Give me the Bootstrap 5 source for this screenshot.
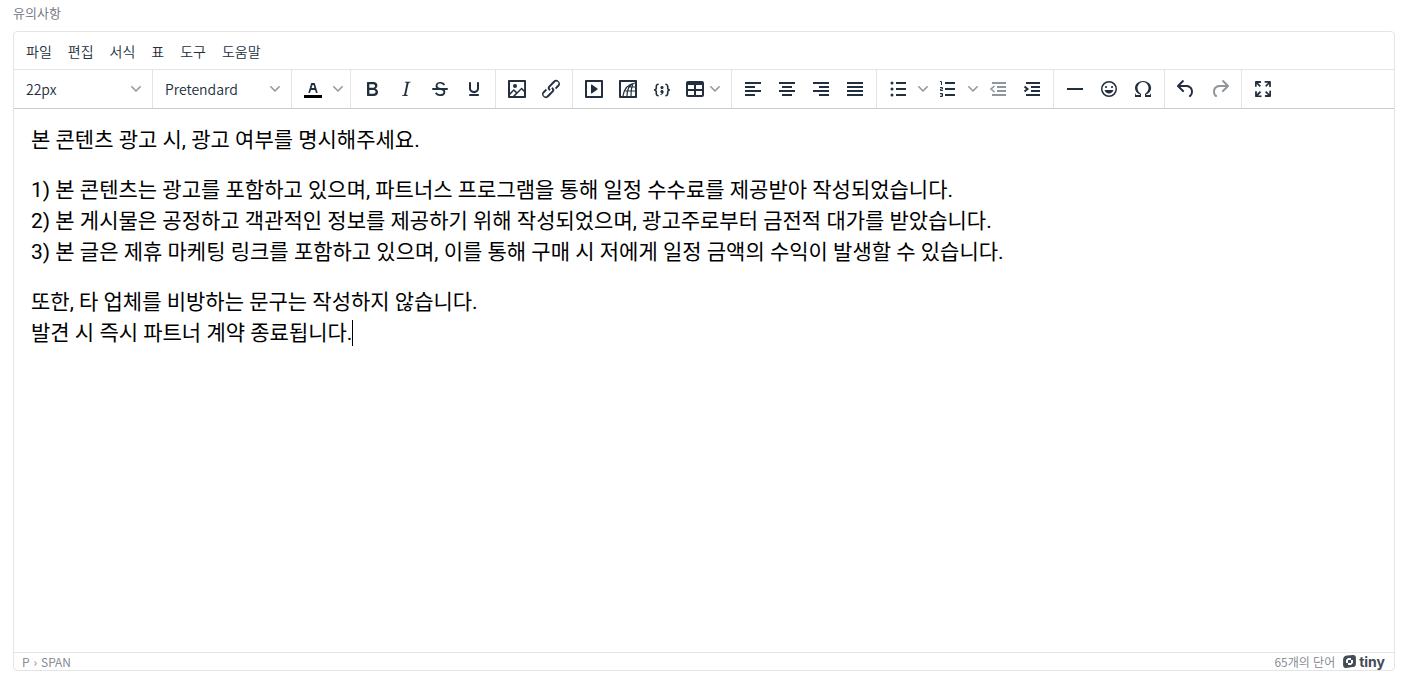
<!DOCTYPE html>
<html lang="ko">
<head>
<meta charset="utf-8">
<meta name="viewport" content="width=device-width, initial-scale=1">
<title>유의사항</title>
<link rel="stylesheet" href="https://cdn.jsdelivr.net/npm/bootstrap@5.3.0/dist/css/bootstrap.min.css">
<style>
  body { font-family: "Noto Sans CJK KR", sans-serif; font-size: 14px; font-weight: 350; color: #222f3e; }
  .page { padding: 3px 9px 6px 13px; }
  .field-label { font-size: 13px; line-height: 20px; margin-bottom: 8px; color: #6c7078; }
  .editor { border: 1px solid #e3e5e5; border-radius: 4px; }
  .menubar { padding: 4px; height: 37px; }
  .menubar .btn { font-size: 14px; font-weight: 350; line-height: 20px; padding: 4px 8px; border: 0; border-radius: 3px; color: #222f3e; }
  .toolbar { border-top: 1px solid #e3e5e5; border-bottom: 1px solid #c9cccd; }
  .tool-group { height: 38px; padding: 0 4px; border-right: 1px solid #e3e5e5; }
  .tool-group:last-child { border-right: 0; }
  .tool-select { appearance: none; width: 130px; height: 28px; padding: 0 24px 0 8px; border: 0; border-radius: 3px; color: #222f3e; font-weight: 350;
    background: transparent url("data:image/svg+xml,%3Csvg xmlns='http://www.w3.org/2000/svg' viewBox='0 0 10 10'%3E%3Cpath fill='none' stroke='%23909499' stroke-width='1.5' stroke-linecap='round' d='M.8 2.8 5 7l4.2-4.2'/%3E%3C/svg%3E") no-repeat right 7px center / 10px 10px; }
  .tool { width: 34px; height: 28px; padding: 0; border: 0; border-radius: 3px; color: #222f3e; }
  .tool:disabled { color: #222f3e; opacity: .5; border: 0; }
  .tool-arrow { width: 16px; }
  .tool-menu { width: 48px; padding-left: 4px; gap: 3px; }
  .tool svg { fill: currentColor; }
  .tool svg.chev { fill: none; stroke: #909499; stroke-width: 1.5; stroke-linecap: round; }
  .doc { padding: 16px 17px; font-family: Roboto, "Noto Sans CJK KR", sans-serif; font-size: 21px; font-weight: 400; line-height: 31px; color: #000; outline: 0; }
  .doc p { margin-bottom: 19px; }
  .caret { display: inline-block; width: 1px; height: 26px; background: #000; vertical-align: -6px; }
  .statusbar { border-top: 1px solid #e3e5e5; height: 18px; padding: 0 9px 0 8px; font-size: 12px; line-height: 18px; color: #7a828b; }
  .statusbar a { color: inherit; }
  .statusbar .brand-link { font-family: Inter, sans-serif; font-size: 14px; font-weight: 700; gap: 3px; color: #434b55; }
</style>
</head>
<body>
<main class="page d-flex flex-column min-vh-100">
  <div class="field-label" id="notice-label">유의사항</div>
  <section class="editor d-flex flex-column flex-grow-1">
    <nav class="menubar d-flex align-items-center" aria-label="메뉴">
      <button class="btn" type="button">파일</button>
      <button class="btn" type="button">편집</button>
      <button class="btn" type="button">서식</button>
      <button class="btn" type="button">표</button>
      <button class="btn" type="button">도구</button>
      <button class="btn" type="button">도움말</button>
    </nav>
    <div class="toolbar d-flex flex-wrap" role="toolbar" aria-label="도구 모음">
      <div class="tool-group d-flex align-items-center"><select class="tool-select" aria-label="글꼴 크기"><option>22px</option></select></div>
      <div class="tool-group d-flex align-items-center"><select class="tool-select" aria-label="글꼴"><option>Pretendard</option></select></div>
      <div class="tool-group d-flex align-items-center">
        <button class="tool btn d-flex align-items-center justify-content-center" type="button" aria-label="글자 색"><svg width="24" height="24"><path fill="#000" d="M3 18h18v3H3z"/><path d="M8.7 16h-.8a.5.5 0 0 1-.5-.6l2.7-9c.1-.3.3-.4.5-.4h2.8c.2 0 .4.1.5.4l2.7 9a.5.5 0 0 1-.5.6h-.8a.5.5 0 0 1-.4-.4l-.7-2.2c0-.3-.3-.4-.5-.4h-3.4c-.2 0-.4.1-.5.4l-.7 2.2c0 .3-.2.4-.4.4Zm2.6-7.6-.6 2a.5.5 0 0 0 .5.6h1.6a.5.5 0 0 0 .5-.6l-.6-2c0-.3-.3-.4-.5-.4h-.4c-.2 0-.4.1-.5.4Z"/></svg></button>
        <button class="tool tool-arrow btn d-flex align-items-center justify-content-center" type="button" aria-label="글자 색 선택"><svg class="chev" width="10" height="10"><path d="M.8 2.8 5 7l4.2-4.2"/></svg></button>
      </div>
      <div class="tool-group d-flex align-items-center">
        <button class="tool btn d-flex align-items-center justify-content-center" type="button" aria-label="굵게"><svg width="24" height="24"><path fill-rule="evenodd" d="M7.8 19c-.3 0-.5 0-.6-.2l-.2-.5V5.7c0-.2 0-.4.2-.5l.6-.2h5c1.5 0 2.7.3 3.5 1 .7.6 1.1 1.4 1.1 2.5a3 3 0 0 1-.6 1.9c-.4.6-1 1-1.6 1.2.4.1.9.3 1.3.6s.8.7 1 1.2c.4.4.5 1 .5 1.6 0 1.3-.4 2.3-1.3 3-.8.7-2.1 1-3.8 1H7.8Zm5-8.3c.6 0 1.2-.1 1.6-.5.4-.3.6-.7.6-1.3 0-1.1-.8-1.7-2.3-1.7H9.3v3.5h3.4Zm.5 6c.7 0 1.3-.1 1.7-.4.4-.4.6-.9.6-1.5s-.2-1-.7-1.4c-.4-.3-1-.4-2-.4H9.4v3.8h4Z"/></svg></button>
        <button class="tool btn d-flex align-items-center justify-content-center" type="button" aria-label="기울임"><svg width="24" height="24"><path d="m16.7 4.7-.1.9h-.3c-.6 0-1 0-1.4.3-.3.3-.4.6-.5 1.1l-2.1 9.8v.6c0 .5.4.8 1.4.8h.2l-.2.8H8l.2-.8h.2c1.1 0 1.8-.5 2-1.5l2-9.8.1-.5c0-.6-.4-.8-1.4-.8h-.3l.2-.9h5.8Z"/></svg></button>
        <button class="tool btn d-flex align-items-center justify-content-center" type="button" aria-label="취소선"><svg width="24" height="24"><path d="M15.6 8.5c-.5-.7-1-1.1-1.3-1.3-.6-.4-1.3-.6-2-.6-2.7 0-2.8 1.7-2.8 2.1 0 1.6 1.8 2 3.2 2.3 4.4.9 4.6 2.8 4.6 3.9 0 1.4-.7 4.1-5 4.1A6.2 6.2 0 0 1 7 16.4l1.5-1.1c.4.6 1.6 2 3.7 2 1.6 0 2.5-.4 3-1.2.4-.8.3-2-.8-2.6-.7-.4-1.6-.7-2.9-1-1-.2-3.9-.8-3.9-3.6C7.6 6 10.3 5 12.4 5c2.9 0 4.2 1.6 4.7 2.4l-1.5 1.1Z"/><path d="M5 11h14a1 1 0 0 1 0 2H5a1 1 0 0 1 0-2Z"/></svg></button>
        <button class="tool btn d-flex align-items-center justify-content-center" type="button" aria-label="밑줄"><svg width="24" height="24"><path d="M16 5c.6 0 1 .4 1 1v5.5a4 4 0 0 1-.4 1.8l-1 1.4a5.3 5.3 0 0 1-5.5 1 5 5 0 0 1-1.6-1c-.5-.4-.8-.9-1.1-1.4a4 4 0 0 1-.4-1.8V6c0-.6.4-1 1-1s1 .4 1 1v5.5c0 .3 0 .6.2 1l.6.7a3.3 3.3 0 0 0 2.2.8 3.4 3.4 0 0 0 2.2-.8c.3-.2.4-.5.6-.8l.2-.9V6c0-.6.4-1 1-1ZM8 17h8c.6 0 1 .4 1 1s-.4 1-1 1H8a1 1 0 0 1 0-2Z"/></svg></button>
      </div>
      <div class="tool-group d-flex align-items-center">
        <button class="tool btn d-flex align-items-center justify-content-center" type="button" aria-label="이미지"><svg width="24" height="24"><path fill-rule="evenodd" d="m5 15.7 3.3-3.2c.3-.3.7-.3 1 0L12 15l4.1-4c.3-.4.8-.4 1 0l2 1.9V5H5v10.7ZM5 18V19h3l2.8-2.9-2-2L5 17.9Zm14-3-2.5-2.4-6.4 6.5H19v-4ZM4 3h16c.6 0 1 .4 1 1v16c0 .6-.4 1-1 1H4a1 1 0 0 1-1-1V4c0-.6.4-1 1-1Zm6 8a2 2 0 1 0 0-4 2 2 0 0 0 0 4Z"/></svg></button>
        <button class="tool btn d-flex align-items-center justify-content-center" type="button" aria-label="링크"><svg width="24" height="24"><path d="M6.2 12.3a1 1 0 0 1 1.4 1.4l-2 2a2 2 0 1 0 2.6 2.8l4.8-4.8a1 1 0 0 0 0-1.4 1 1 0 1 1 1.4-1.3 2.9 2.9 0 0 1 0 4L9.6 20a3.9 3.9 0 0 1-5.5-5.5l2-2Zm11.6-.6a1 1 0 0 1-1.4-1.4l2-2a2 2 0 1 0-2.6-2.8L11 10.3a1 1 0 0 0 0 1.4A1 1 0 1 1 9.6 13a2.9 2.9 0 0 1 0-4L14.4 4a3.9 3.9 0 0 1 5.5 5.5l-2 2Z"/></svg></button>
      </div>
      <div class="tool-group d-flex align-items-center">
        <button class="tool btn d-flex align-items-center justify-content-center" type="button" aria-label="미디어"><svg width="24" height="24"><path fill-rule="evenodd" d="M4 3h16c.6 0 1 .4 1 1v16c0 .6-.4 1-1 1H4a1 1 0 0 1-1-1V4c0-.6.4-1 1-1Zm1 2v14h14V5H5Zm4.8 2.6 5.6 4a.5.5 0 0 1 0 .8l-5.6 4A.5.5 0 0 1 9 16V8a.5.5 0 0 1 .8-.4Z"/></svg></button>
        <button class="tool btn d-flex align-items-center justify-content-center" type="button" aria-label="차트"><svg width="24" height="24"><path fill-rule="evenodd" d="M4 3h16c.6 0 1 .4 1 1v16c0 .6-.4 1-1 1H4a1 1 0 0 1-1-1V4c0-.6.4-1 1-1Zm1 2v14h14V5H5Z"/><path fill="none" stroke="currentColor" stroke-width="1.2" d="M7 19C8 12 12 7 19 6M11 19c0-5 1-9 5-12M15 19c0-4 0-8 2-12M9 14h10M12 10h7"/></svg></button>
        <button class="tool btn d-flex align-items-center justify-content-center" type="button" aria-label="코드 샘플"><svg width="24" height="24"><path d="M7.1 11a2.8 2.8 0 0 1-.8 2 2.8 2.8 0 0 1 .8 2v1.7c0 .3.1.6.4.8.2.3.5.4.8.4.3 0 .4.2.4.4v.8c0 .2-.1.4-.4.4-.7 0-1.4-.3-2-.8-.5-.6-.8-1.3-.8-2V15c0-.3-.1-.6-.4-.8-.2-.3-.5-.4-.8-.4a.4.4 0 0 1-.4-.4v-.8c0-.2.2-.4.4-.4.3 0 .6-.1.8-.4.3-.2.4-.5.4-.8V9.3c0-.7.3-1.4.8-2 .6-.5 1.3-.8 2-.8.3 0 .4.2.4.4v.8c0 .2-.1.4-.4.4-.3 0-.6.1-.8.4-.3.2-.4.5-.4.8V11Zm9.8 0V9.3c0-.3-.1-.6-.4-.8-.2-.3-.5-.4-.8-.4a.4.4 0 0 1-.4-.4V7c0-.2.1-.4.4-.4.7 0 1.4.3 2 .8.5.6.8 1.3.8 2V11c0 .3.1.6.4.8.2.3.5.4.8.4.2 0 .4.2.4.4v.8c0 .2-.2.4-.4.4-.3 0-.6.1-.8.4-.3.2-.4.5-.4.8v1.7c0 .7-.3 1.4-.8 2-.6.5-1.3.8-2 .8a.4.4 0 0 1-.4-.4v-.8c0-.2.1-.4.4-.4.3 0 .6-.1.8-.4.3-.2.4-.5.4-.8V15a2.8 2.8 0 0 1 .8-2 2.8 2.8 0 0 1-.8-2Zm-3.3-.4c0 .4-.1.8-.5 1.1-.3.3-.7.5-1.1.5-.4 0-.8-.2-1.1-.5-.4-.3-.5-.7-.5-1.1 0-.5.1-.9.5-1.2.3-.3.7-.4 1.1-.4.4 0 .8.1 1.1.4.4.3.5.7.5 1.2ZM12 13c.4 0 .8.1 1.1.5.4.3.5.7.5 1.1 0 1-.1 1.6-.5 2a3 3 0 0 1-1.1 1c-.4.3-.8.4-1.1.4a.5.5 0 0 1-.5-.5V17a3 3 0 0 0 1-.2l.6-.6c-.6 0-1-.2-1.3-.5-.2-.3-.3-.7-.3-1 0-.5.1-1 .5-1.2.3-.4.7-.5 1.1-.5Z"/></svg></button>
        <button class="tool tool-menu btn d-flex align-items-center" type="button" aria-label="표"><svg width="24" height="24"><path fill-rule="evenodd" d="M19 4a2 2 0 0 1 2 2v12a2 2 0 0 1-2 2H5a2 2 0 0 1-2-2V6c0-1.1.9-2 2-2h14ZM5 14v4h6v-4H5Zm14 0h-6v4h6v-4Zm0-6h-6v4h6V8ZM5 12h6V8H5v4Z"/></svg><svg class="chev" width="10" height="10"><path d="M.8 2.8 5 7l4.2-4.2"/></svg></button>
      </div>
      <div class="tool-group d-flex align-items-center">
        <button class="tool btn d-flex align-items-center justify-content-center" type="button" aria-label="왼쪽 맞춤"><svg width="24" height="24"><path d="M4 5h16v2H4zM4 9h10v2H4zM4 13h16v2H4zM4 17h10v2H4z"/></svg></button>
        <button class="tool btn d-flex align-items-center justify-content-center" type="button" aria-label="가운데 맞춤"><svg width="24" height="24"><path d="M4 5h16v2H4zM7 9h10v2H7zM4 13h16v2H4zM7 17h10v2H7z"/></svg></button>
        <button class="tool btn d-flex align-items-center justify-content-center" type="button" aria-label="오른쪽 맞춤"><svg width="24" height="24"><path d="M4 5h16v2H4zM10 9h10v2H10zM4 13h16v2H4zM10 17h10v2H10z"/></svg></button>
        <button class="tool btn d-flex align-items-center justify-content-center" type="button" aria-label="양쪽 맞춤"><svg width="24" height="24"><path d="M4 5h16v2H4zM4 9h16v2H4zM4 13h16v2H4zM4 17h16v2H4z"/></svg></button>
      </div>
      <div class="tool-group d-flex align-items-center">
        <button class="tool btn d-flex align-items-center justify-content-center" type="button" aria-label="글머리 기호"><svg width="24" height="24"><path d="M10 5h10v2H10zM10 11h10v2H10zM10 17h10v2H10z"/><circle cx="6" cy="6" r="1.5"/><circle cx="6" cy="12" r="1.5"/><circle cx="6" cy="18" r="1.5"/></svg></button>
        <button class="tool tool-arrow btn d-flex align-items-center justify-content-center" type="button" aria-label="글머리 기호 종류"><svg class="chev" width="10" height="10"><path d="M.8 2.8 5 7l4.2-4.2"/></svg></button>
        <button class="tool btn d-flex align-items-center justify-content-center" type="button" aria-label="번호 목록"><svg width="24" height="24"><path d="M9 5h10v2H9zM9 11h10v2H9zM9 17h10v2H9z"/><path fill="none" stroke="currentColor" d="M4 4.500h1.500V8M4 10.500h2.500V12h-2v1.500H7M4 16.500h2.500v3H4M4.500 18h2"/></svg></button>
        <button class="tool tool-arrow btn d-flex align-items-center justify-content-center" type="button" aria-label="번호 목록 종류"><svg class="chev" width="10" height="10"><path d="M.8 2.8 5 7l4.2-4.2"/></svg></button>
        <button class="tool btn d-flex align-items-center justify-content-center" type="button" aria-label="내어쓰기" disabled><svg width="24" height="24"><path d="M6 5h14v2H6zM11 9h9v2h-9zM11 13h9v2h-9zM6 17h14v2H6z"/><path fill="none" stroke="currentColor" stroke-width="1.6" d="M8.500 9 5 12l3.500 3"/></svg></button>
        <button class="tool btn d-flex align-items-center justify-content-center" type="button" aria-label="들여쓰기"><svg width="24" height="24"><path d="M6 5h14v2H6zM11 9h9v2h-9zM11 13h9v2h-9zM6 17h14v2H6z"/><path fill="none" stroke="currentColor" stroke-width="2" d="M4.500 9.500 7.500 12l-3 2.500"/></svg></button>
      </div>
      <div class="tool-group d-flex align-items-center">
        <button class="tool btn d-flex align-items-center justify-content-center" type="button" aria-label="가로줄"><svg width="24" height="24"><path d="M4 11h16v2H4z"/></svg></button>
        <button class="tool btn d-flex align-items-center justify-content-center" type="button" aria-label="이모티콘"><svg width="24" height="24"><path fill-rule="evenodd" d="M9 11c.6 0 1-.4 1-1s-.4-1-1-1a1 1 0 0 0-1 1c0 .6.4 1 1 1Zm6 0c.6 0 1-.4 1-1s-.4-1-1-1a1 1 0 0 0-1 1c0 .6.4 1 1 1Zm-3 5.5c2.1 0 4-1.5 4.4-3.5H7.6c.5 2 2.3 3.5 4.4 3.5ZM12 4a8 8 0 1 0 0 16 8 8 0 0 0 0-16Zm0 14.5a6.5 6.5 0 1 1 0-13 6.5 6.5 0 0 1 0 13Z"/></svg></button>
        <button class="tool btn d-flex align-items-center justify-content-center" type="button" aria-label="특수 문자"><svg width="24" height="24"><path fill-rule="evenodd" d="M15 18h4l1-2v4h-6v-3.3l1.4-1a6 6 0 0 0 1.8-2.9 6.3 6.3 0 0 0-.1-4.1 5.8 5.8 0 0 0-3-3.2c-.6-.3-1.3-.5-2.1-.5a5.1 5.1 0 0 0-3.9 1.8 6.3 6.3 0 0 0-1.3 6 6.2 6.2 0 0 0 1.8 3l1.4.9V20H4v-4l1 2h4v-.5l-2-1L5.4 15A6.5 6.5 0 0 1 4 11c0-1 .2-1.9.6-2.7A7 7 0 0 1 6.3 6C7.1 5.4 8 5 9 4.5c1-.3 2-.5 3.1-.5a8.8 8.8 0 0 1 5.7 2 7 7 0 0 1 1.7 2.3 6 6 0 0 1 .2 4.8c-.2.7-.6 1.3-1 1.9a7.6 7.6 0 0 1-3.6 2.5v.5Z"/></svg></button>
      </div>
      <div class="tool-group d-flex align-items-center">
        <button class="tool btn d-flex align-items-center justify-content-center" type="button" aria-label="실행 취소"><svg width="24" height="24"><path d="M6.4 8H12c3.7 0 6.2 2 6.8 5.1.6 2.7-.4 5.6-2.3 6.8a1 1 0 0 1-1-1.8c1.1-.6 1.8-2.7 1.4-4.6-.5-2.1-2.1-3.5-4.9-3.5H6.4l3.3 3.3a1 1 0 1 1-1.4 1.4l-5-5a1 1 0 0 1 0-1.4l5-5a1 1 0 0 1 1.4 1.4L6.4 8Z"/></svg></button>
        <button class="tool btn d-flex align-items-center justify-content-center" type="button" aria-label="다시 실행" disabled><svg width="24" height="24"><path transform="matrix(-1 0 0 1 24 0)" d="M6.4 8H12c3.7 0 6.2 2 6.8 5.1.6 2.7-.4 5.6-2.3 6.8a1 1 0 0 1-1-1.8c1.1-.6 1.8-2.7 1.4-4.6-.5-2.1-2.1-3.5-4.9-3.5H6.4l3.3 3.3a1 1 0 1 1-1.4 1.4l-5-5a1 1 0 0 1 0-1.4l5-5a1 1 0 0 1 1.4 1.4L6.4 8Z"/></svg></button>
      </div>
      <div class="tool-group d-flex align-items-center">
        <button class="tool btn d-flex align-items-center justify-content-center" type="button" aria-label="전체 화면"><svg width="24" height="24"><path d="m15.3 10-1.2-1.3 2.9-3h-2.3a.9.9 0 1 1 0-1.7H19c.5 0 .9.4.9.9v4.4a.9.9 0 1 1-1.8 0V7l-2.9 3Zm0 4 3 3v-2.3a.9.9 0 1 1 1.7 0V19c0 .5-.4.9-.9.9h-4.4a.9.9 0 1 1 0-1.8H17l-3-2.9 1.3-1.2ZM10 15.4l-2.9 3h2.3a.9.9 0 1 1 0 1.7H5a.9.9 0 0 1-.9-.9v-4.4a.9.9 0 1 1 1.8 0V17l2.9-3 1.2 1.3ZM8.7 10 5.7 7v2.3a.9.9 0 0 1-1.7 0V5c0-.5.4-.9.9-.9h4.4a.9.9 0 0 1 0 1.8H7l3 2.9-1.3 1.2Z"/></svg></button>
      </div>
    </div>
    <div class="doc flex-grow-1" contenteditable="true" spellcheck="false" role="textbox" aria-multiline="true" aria-labelledby="notice-label">
      <p>본 콘텐츠 광고 시, 광고 여부를 명시해주세요.</p>
      <p>1) 본 콘텐츠는 광고를 포함하고 있으며, 파트너스 프로그램을 통해 일정 수수료를 제공받아 작성되었습니다.<br>2) 본 게시물은 공정하고 객관적인 정보를 제공하기 위해 작성되었으며, 광고주로부터 금전적 대가를 받았습니다.<br>3) 본 글은 제휴 마케팅 링크를 포함하고 있으며, 이를 통해 구매 시 저에게 일정 금액의 수익이 발생할 수 있습니다.</p>
      <p>또한, 타 업체를 비방하는 문구는 작성하지 않습니다.<br>발견 시 즉시 파트너 계약 종료됩니다.<span class="caret"></span></p>
    </div>
    <footer class="statusbar d-flex justify-content-between">
      <div class="d-flex gap-1"><a class="text-decoration-none" href="#">P</a><span>›</span><a class="text-decoration-none" href="#">SPAN</a></div>
      <div class="d-flex gap-2"><span>65개의 단어</span><a class="brand-link d-flex align-items-center text-decoration-none" href="#"><svg width="13" height="13" viewBox="0 0 13 13" aria-hidden="true"><path fill="currentColor" fill-rule="evenodd" d="M4.5.6 10 .1A2.6 2.6 0 0 1 12.900 3v5.500a3.500 3.500 0 0 1-3.500 3.600L3 12.900A2.600 2.600 0 0 1 .1 10V4.500A4 4 0 0 1 4.500.6ZM5 3 3 5v3h2v2h3l2-2V5H8V3H5Z"/><path fill="currentColor" d="M5 5h3v3H5z"/></svg>tiny</a></div>
    </footer>
  </section>
</main>
<script src="https://cdn.jsdelivr.net/npm/bootstrap@5.3.0/dist/js/bootstrap.bundle.min.js"></script>
</body>
</html>
